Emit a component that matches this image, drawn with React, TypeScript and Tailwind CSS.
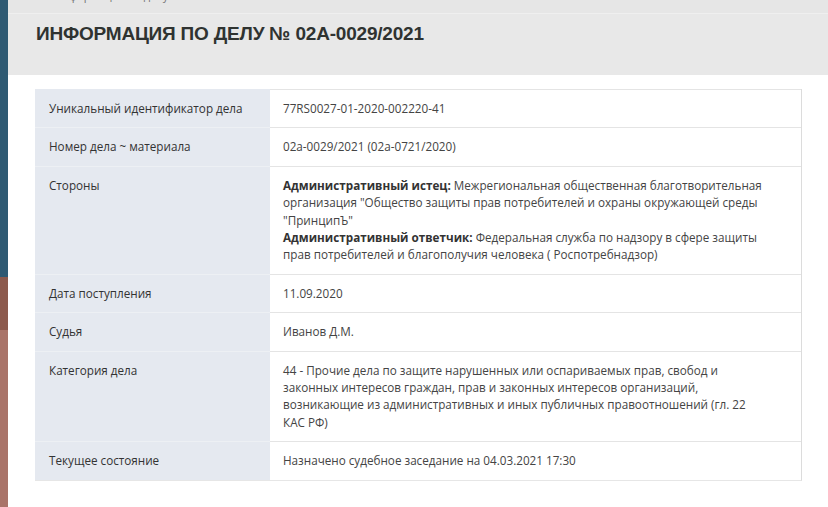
import React from 'react';

type Row = { label: string; value: React.ReactNode };

const rows: Row[] = [
  { label: 'Уникальный идентификатор дела', value: '77RS0027-01-2020-002220-41' },
  { label: 'Номер дела ~ материала', value: '02а-0029/2021 (02а-0721/2020)' },
  {
    label: 'Стороны',
    value: (
      <>
        <b className="font-bold text-[#333]">Административный истец:</b> Межрегиональная общественная благотворительная
        организация "Общество защиты прав потребителей и охраны окружающей среды "ПринципЪ"
        <br />
        <b className="font-bold text-[#333]">Административный ответчик:</b> Федеральная служба по надзору в сфере защиты
        прав потребителей и благополучия человека ( Роспотребнадзор)
      </>
    ),
  },
  { label: 'Дата поступления', value: '11.09.2020' },
  { label: 'Судья', value: 'Иванов Д.М.' },
  {
    label: 'Категория дела',
    value:
      '44 - Прочие дела по защите нарушенных или оспариваемых прав, свобод и законных интересов граждан, прав и законных интересов организаций, возникающие из административных и иных публичных правоотношений (гл. 22 КАС РФ)',
  },
  { label: 'Текущее состояние', value: 'Назначено судебное заседание на 04.03.2021 17:30' },
];

const App: React.FC = () => {
  return (
    <div className="flex min-h-[507px] w-full bg-white" style={{ fontFamily: '"Open Sans", sans-serif' }}>
      {/* side strip */}
      <div className="flex w-[8px] shrink-0 flex-col">
        <div className="h-[277px] bg-[#2f5a73]" />
        <div className="h-[53px] bg-[#8c5a4d]" />
        <div className="flex-1 bg-[#a97469]" />
      </div>

      <div className="flex-1">
        <div className="bg-[#e8e8e8]">
          <div className="flex h-[14px] items-end overflow-hidden border-b border-[#efefef] bg-[#e6e6e6] pl-[34px]">
            <div className="flex items-center gap-[8px] text-[11px] leading-[13px] text-[#777] -translate-y-[11px]">
              <span className="h-[4px] w-[4px] rounded-full bg-[#6f8f6f]" />
              <span>Информация по делу № 02а-0029/2021</span>
            </div>
          </div>
          <div className="h-[61px] pl-[28px] pt-[9px]">
            <h1
              className="text-[19px] font-black uppercase leading-[22px] tracking-[-0.2px] text-[#2f3331]"
              style={{ fontFamily: '"Liberation Sans", sans-serif' }}
            >
              Информация по делу № 02А-0029/2021
            </h1>
          </div>
        </div>

        <div className="pl-[27px] pr-[26px] pt-[14px]">
          <div className="border-r border-[#dcdcdc] border-b border-b-[#e6e6e6]">
            {rows.map((r, i) => (
              <div key={r.label} className="grid grid-cols-[235px_1fr] text-[11.7px] leading-[17.4px]">
                <div
                  className={`bg-[#e5e9f0] px-[14px] pb-[10px] pt-[10px] text-[#333] border-t ${
                    i === 0 ? 'border-[#e5e9f0]' : 'border-[#edf0f4]'
                  }`}
                >
                  {r.label}
                </div>
                <div className="border-t border-[#e4e4e4] px-[13px] pb-[10px] pt-[10px] text-[#444]">
                  <div className="max-w-[480px]">{r.value}</div>
                </div>
              </div>
            ))}
          </div>
        </div>
      </div>
    </div>
  );
};

export default App;
